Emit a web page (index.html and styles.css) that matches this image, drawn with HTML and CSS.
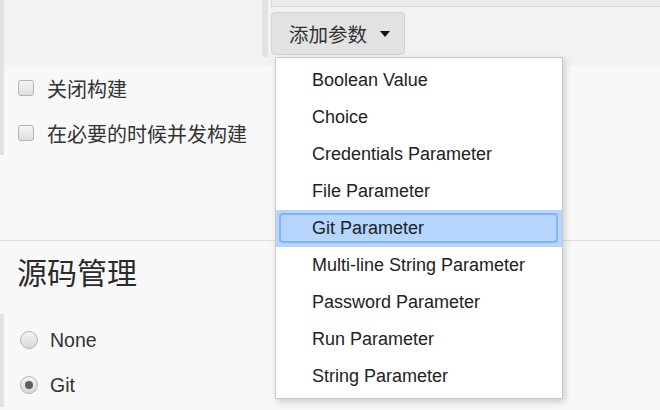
FILE: index.html
```html
<!DOCTYPE html>
<html lang="zh">
<head>
<meta charset="utf-8">
<title>Jenkins 配置</title>
<link rel="stylesheet" href="styles.css">
</head>
<body>
<div class="page">
  <div class="section general">
    <div class="top">
      <div class="param">
        <div class="field"></div>
        <button class="btn" type="button"><span class="btn-text">添加参数</span><span class="caret"></span></button>
      </div>
    </div>
    <div class="options">
      <label class="row"><span class="checkbox"></span><span class="label cjk">关闭构建</span></label>
      <label class="row"><span class="checkbox"></span><span class="label cjk">在必要的时候并发构建</span></label>
    </div>
  </div>

  <div class="scm">
    <h2 class="heading">源码管理</h2>
    <div class="section radios">
      <label class="row"><span class="radio"></span><span class="label latin">None</span></label>
      <label class="row"><span class="radio checked"></span><span class="label latin">Git</span></label>
    </div>
  </div>

  <ul class="menu">
    <li class="item">Boolean Value</li>
    <li class="item">Choice</li>
    <li class="item">Credentials Parameter</li>
    <li class="item">File Parameter</li>
    <li class="item active"><span class="focus">Git Parameter</span></li>
    <li class="item">Multi-line String Parameter</li>
    <li class="item">Password Parameter</li>
    <li class="item">Run Parameter</li>
    <li class="item">String Parameter</li>
  </ul>
</div>
</body>
</html>
```

FILE: styles.css
```css
* { box-sizing: border-box; }

html, body {
  margin: 0;
  padding: 0;
  background: #f8f8f8;
  width: 660px;
  height: 410px;
  overflow: hidden;
}

.page {
  position: relative;
  width: 660px;
  height: 410px;
  font-family: "Liberation Sans", "Noto Sans CJK SC", sans-serif;
  color: #333;
}

.section {
  border-left: 4px solid #e2e2e2;
}

.general {
  margin-bottom: 85px;
}

.top {
  display: flex;
  height: 65px;
  background: #f2f2f2;
  padding-left: 258px;
}

.param {
  flex: 1;
  height: 57px;
  border-left: 6px solid #e3e3e3;
  padding-left: 3px;
  display: flex;
  flex-direction: column;
}

.field {
  height: 7px;
  background: #ececec;
  border: 1px solid #d8d8d8;
  border-top: none;
  border-right: none;
}

.btn {
  margin-top: 5px;
  align-self: flex-start;
  display: inline-flex;
  align-items: center;
  height: 43px;
  width: 134px;
  padding: 0 0 0 17px;
  background: #e2e2e2;
  border: 1px solid #d2d2d2;
  border-radius: 4px;
  font-family: "Noto Sans CJK SC", sans-serif;
  font-size: 19.5px;
  color: #333;
  cursor: pointer;
}

.btn-text { line-height: 1; }

.caret {
  margin-left: 13px;
  width: 0;
  height: 0;
  border-left: 5.5px solid transparent;
  border-right: 5.5px solid transparent;
  border-top: 6px solid #111;
}

.options {
  padding-top: 0;
}

.row {
  display: flex;
  align-items: center;
  height: 45px;
}

.checkbox {
  width: 16px;
  height: 16px;
  margin-left: 14px;
  margin-right: 13px;
  border: 1px solid #b3b3b3;
  border-radius: 3px;
  background: linear-gradient(#f6f6f6, #dedede);
  flex: none;
}

.label {
  color: #333;
}

.label.cjk {
  font-family: "Noto Sans CJK SC", sans-serif;
  font-size: 20px;
  line-height: 1;
  margin-top: 3px;
}

.label.latin {
  font-size: 19.5px;
  margin-top: 2px;
}

.scm {
  border-top: 1px solid #dcdcdc;
}

.heading {
  margin: 0;
  padding: 10px 0 0 17px;
  height: 73px;
  font-family: "Noto Sans CJK SC", serif;
  font-weight: 400;
  font-size: 30px;
  line-height: 40px;
  color: #2a2a2a;
}

.radios {
  padding-top: 3px;
}

.radio {
  position: relative;
  width: 18px;
  height: 18px;
  margin-left: 16px;
  margin-right: 12px;
  border: 1px solid #b5b5b5;
  border-radius: 50%;
  background: linear-gradient(#f3f3f3, #d9d9d9);
  flex: none;
}

.radio.checked::after {
  content: "";
  position: absolute;
  left: 4px;
  top: 4px;
  width: 8px;
  height: 8px;
  border-radius: 50%;
  background: #5e5e5e;
}

.menu {
  position: absolute;
  left: 275px;
  top: 57px;
  width: 288px;
  margin: 0;
  padding: 4px 0 3px;
  list-style: none;
  background: #fff;
  border: 1px solid #c9c9c9;
  box-shadow: 2px 3px 7px rgba(0, 0, 0, 0.18);
}

.item {
  height: 37px;
  display: flex;
  align-items: center;
  padding-left: 36px;
  font-size: 18px;
  color: #222;
}

.item.active {
  background: #b5d5fd;
  padding: 3px 4px 4px 3px;
}

.focus {
  flex: 1;
  align-self: stretch;
  display: flex;
  align-items: center;
  padding-left: 31px;
  border: 2px solid #82b3f3;
  border-radius: 4px;
}
```
